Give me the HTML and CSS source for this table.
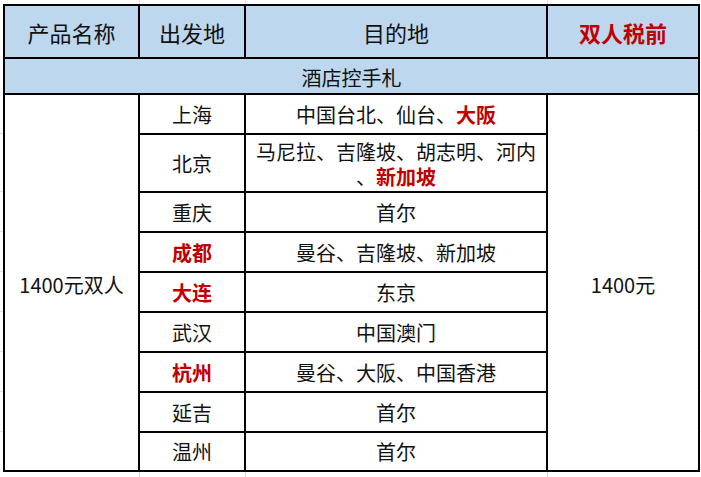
FILE: index.html
```html
<!DOCTYPE html>
<html lang="zh-CN">
<head>
<meta charset="utf-8">
<title>酒店控手札</title>
<link rel="stylesheet" href="styles.css">
</head>
<body>
<div class="sheet">
  <div class="cell head">产品名称</div>
  <div class="cell head">出发地</div>
  <div class="cell head">目的地</div>
  <div class="cell head red">双人税前</div>
  <div class="cell group">酒店控手札</div>

  <div class="cell product">1400元双人</div>
  <div class="cell">上海</div>
  <div class="cell"><p class="txt">中国台北、仙台、<span class="red">大阪</span></p></div>
  <div class="cell price">1400元</div>

  <div class="cell">北京</div>
  <div class="cell multi"><p class="txt">马尼拉、吉隆坡、胡志明、河内<br>、<span class="red">新加坡</span></p></div>

  <div class="cell">重庆</div>
  <div class="cell">首尔</div>

  <div class="cell red">成都</div>
  <div class="cell">曼谷、吉隆坡、新加坡</div>

  <div class="cell red">大连</div>
  <div class="cell">东京</div>

  <div class="cell">武汉</div>
  <div class="cell">中国澳门</div>

  <div class="cell red">杭州</div>
  <div class="cell">曼谷、大阪、中国香港</div>

  <div class="cell">延吉</div>
  <div class="cell">首尔</div>

  <div class="cell">温州</div>
  <div class="cell">首尔</div>
</div>
</body>
</html>
```

FILE: styles.css
```css
html, body {
  margin: 0;
  padding: 0;
}

body {
  width: 701px;
  height: 477px;
  box-sizing: border-box;
  padding: 4px 0 0 3px;
  background-color: #ffffff;
  background-image:
    linear-gradient(#dcdcdc, #dcdcdc),
    linear-gradient(#dcdcdc, #dcdcdc),
    linear-gradient(#dcdcdc, #dcdcdc),
    linear-gradient(#dcdcdc, #dcdcdc),
    linear-gradient(#dcdcdc, #dcdcdc),
    linear-gradient(#dcdcdc, #dcdcdc),
    linear-gradient(#dcdcdc, #dcdcdc),
    linear-gradient(#dcdcdc, #dcdcdc),
    linear-gradient(#dcdcdc, #dcdcdc),
    linear-gradient(#dcdcdc, #dcdcdc),
    linear-gradient(#dcdcdc, #dcdcdc);
  background-repeat: no-repeat;
  background-size:
    1px 100%, 1px 100%, 1px 100%,
    100% 1px, 100% 1px, 100% 1px, 100% 1px, 100% 1px, 100% 1px, 100% 1px, 100% 1px;
  background-position:
    139px 0, 245px 0, 547px 0,
    0 133px, 0 191px, 0 231px, 0 271px, 0 311px, 0 351px, 0 391px, 0 431px;
  font-family: "Noto Sans CJK SC", "Noto Sans", sans-serif;
  color: #111111;
}

.sheet {
  display: grid;
  grid-template-columns: 133px 104px 300px 150px;
  grid-template-rows: 51px 34px 38px 56px repeat(6, 38px) 37px;
  gap: 2px;
  padding: 2px;
  width: max-content;
  background: #000000;
}

.cell {
  background: #ffffff;
  display: flex;
  align-items: center;
  justify-content: center;
  text-align: center;
  font-size: 20px;
  line-height: 25px;
  white-space: nowrap;
}

.txt {
  margin: 0;
}

.head {
  background: #bdd7ee;
  font-size: 22px;
  padding-top: 2px;
}

.group {
  background: #bdd7ee;
  grid-column: 1 / span 4;
  padding-top: 2px;
}

.product {
  grid-column: 1;
  grid-row: 3 / span 9;
  padding-top: 4px;
}

.price {
  grid-column: 4;
  grid-row: 3 / span 9;
  padding-top: 4px;
}

.multi {
  padding-top: 2px;
}

.red {
  color: #c00000;
  font-weight: bold;
}
```
